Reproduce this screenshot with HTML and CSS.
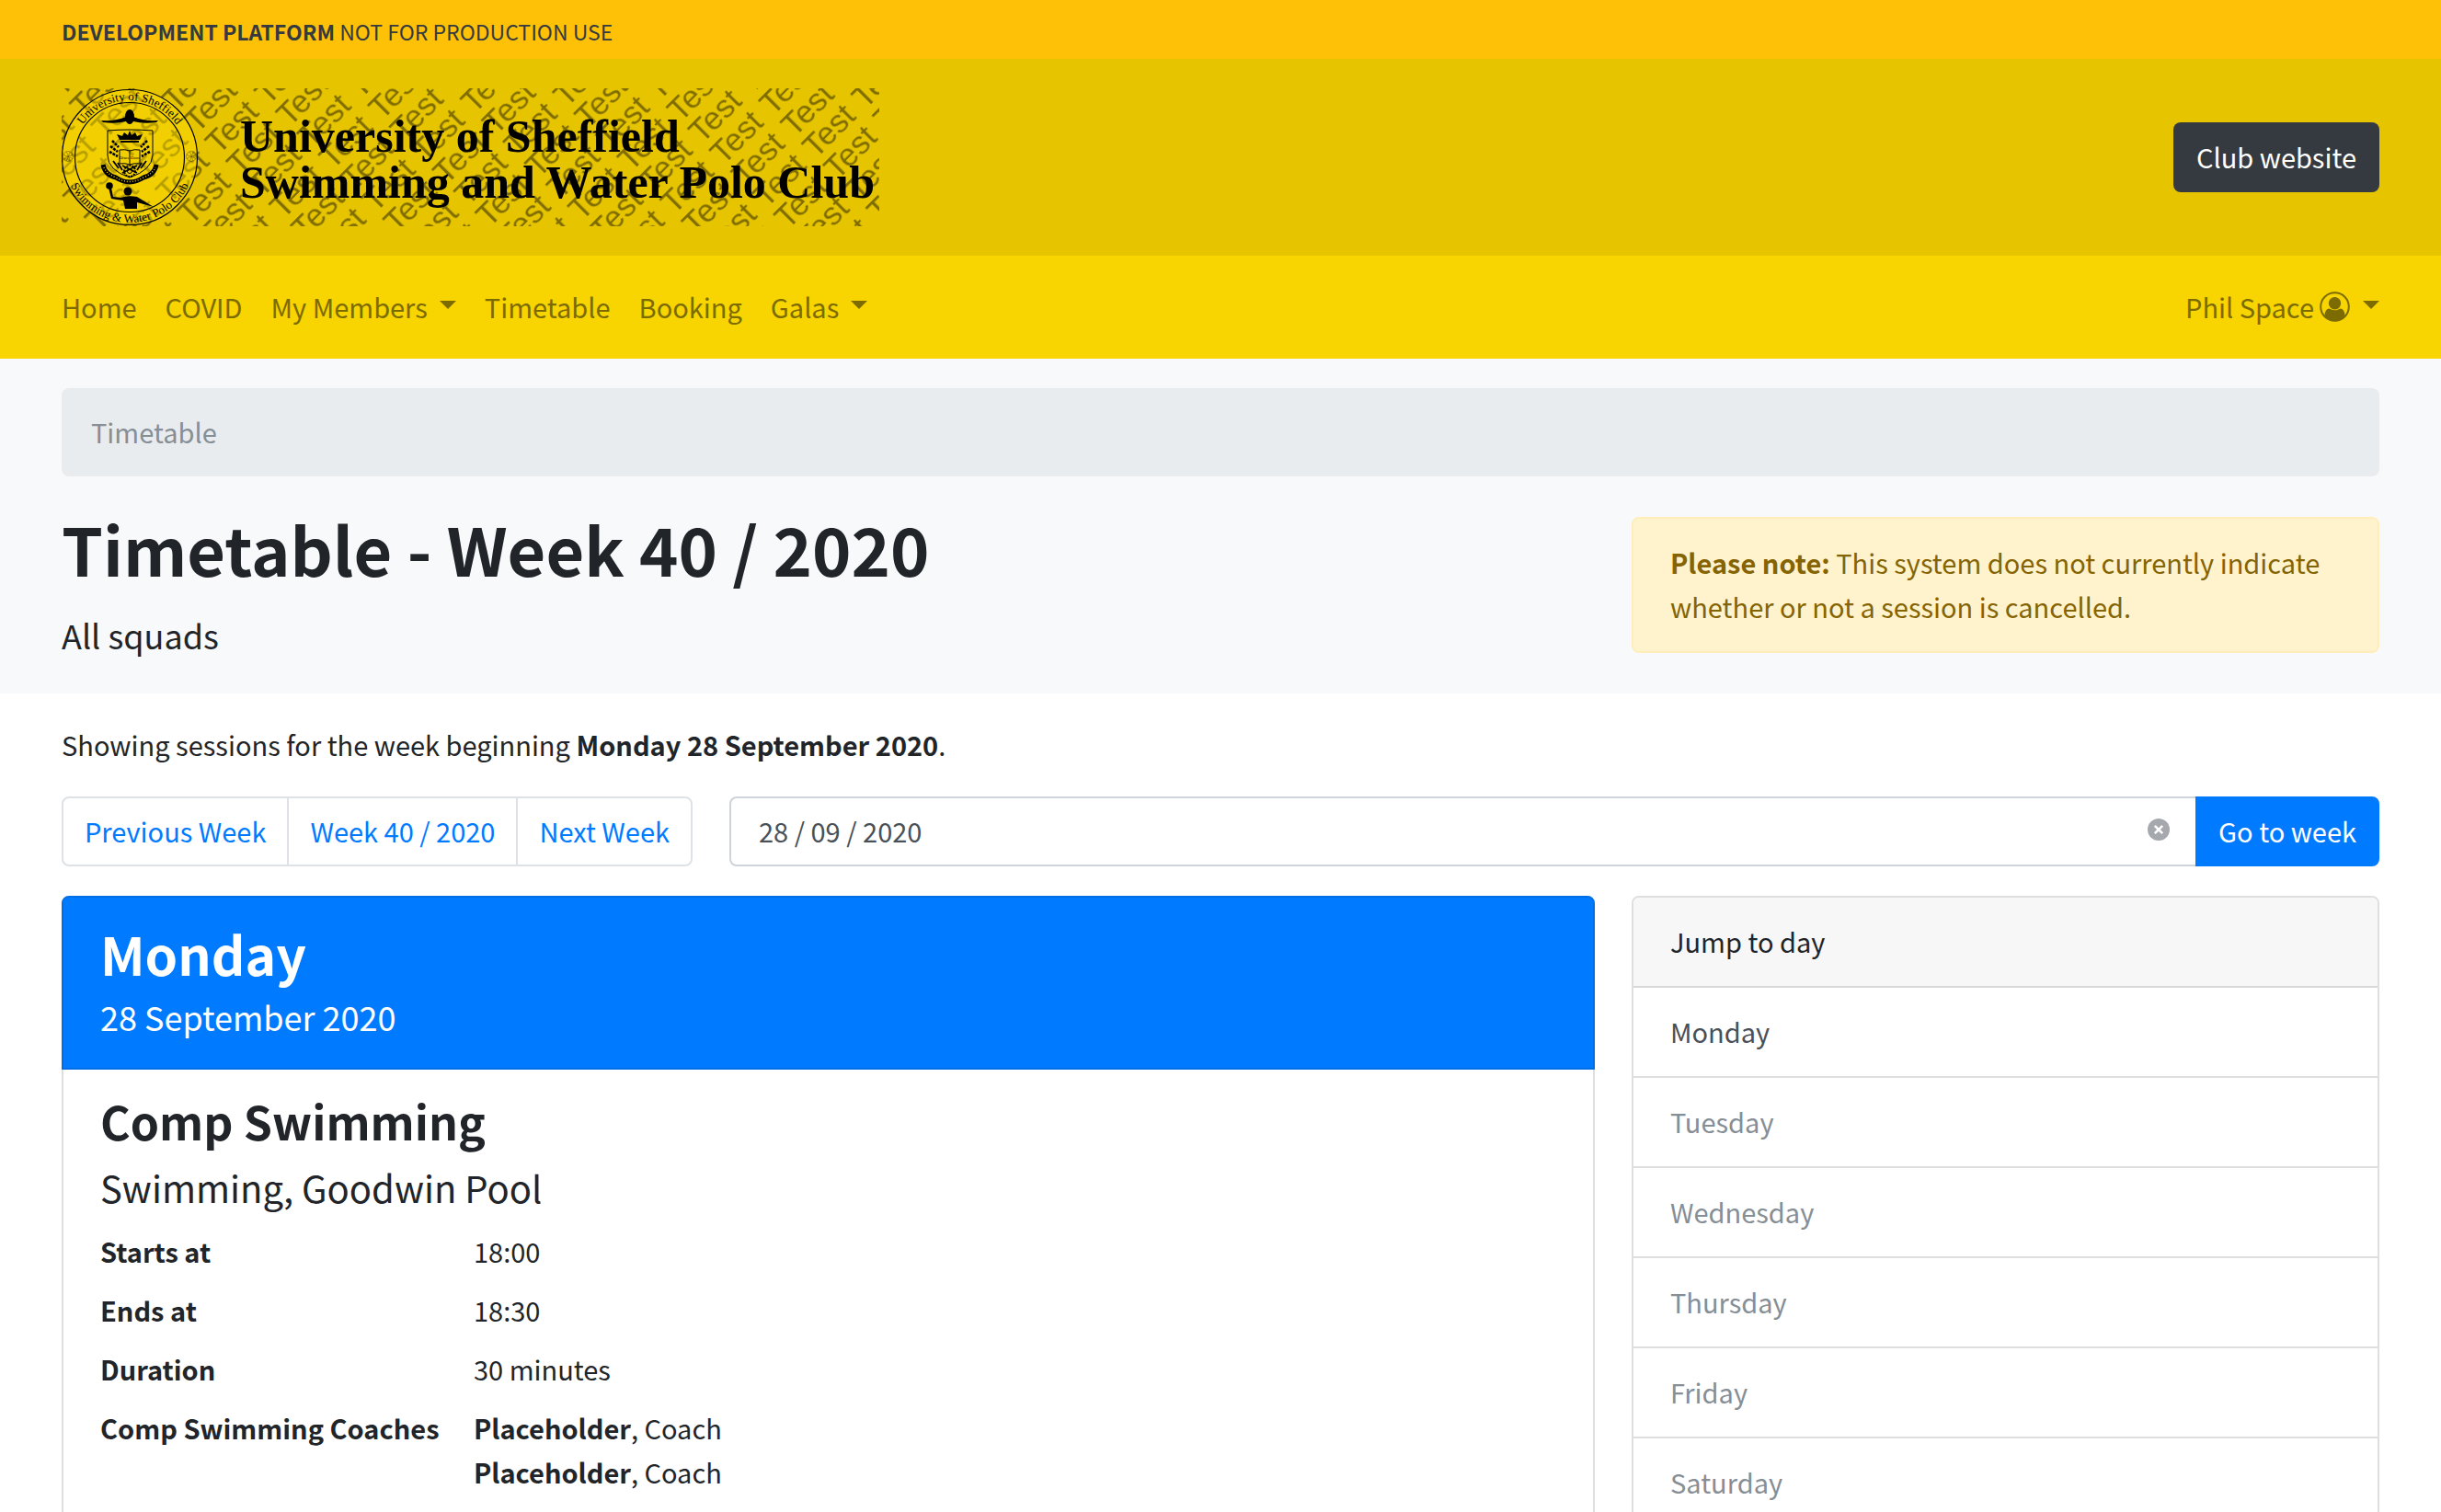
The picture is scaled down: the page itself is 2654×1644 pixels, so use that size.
FILE: index.html
```html
<!DOCTYPE html>
<html lang="en">
<head>
<meta charset="utf-8">
<meta name="viewport" content="width=device-width, initial-scale=1">
<title>Timetable - Week 40 / 2020</title>
<link rel="stylesheet" href="styles.css">
</head>
<body>
<div class="platform-notice"><strong>DEVELOPMENT PLATFORM</strong> NOT FOR PRODUCTION USE</div>

<header class="masthead">
  <a class="logo" href="#" aria-label="University of Sheffield Swimming and Water Polo Club">
    <svg class="logo-art" viewBox="0 0 889 150" width="889" height="150">
      <defs>
        <pattern id="watermark" width="76" height="33" patternUnits="userSpaceOnUse" patternTransform="translate(699 64) rotate(-45)">
          <text class="logo-watermark" x="0" y="29">Test</text>
        </pattern>
        <path id="arc-top" d="M12 75a62 62 0 0 1 124 0"/>
        <path id="arc-bottom" d="M3 75a71 71 0 0 0 142 0"/>
      </defs>
      <rect width="889" height="150" fill="url(#watermark)"/>
      <circle cx="74" cy="75" r="74" fill="#ffdd00" fill-opacity=".45"/>
      <circle cx="74" cy="75" r="73.500" fill="none" stroke="#000" stroke-width="1.200"/>
      <circle cx="74" cy="75" r="59.500" fill="none" stroke="#000" stroke-width="1.200"/>
      <text class="logo-ring"><textPath href="#arc-top" startOffset="50%" text-anchor="middle">University of Sheffield</textPath></text>
      <text class="logo-ring"><textPath href="#arc-bottom" startOffset="50%" text-anchor="middle">Swimming &amp; Water Polo Club</textPath></text>
      <g fill="none" stroke="#000" stroke-opacity=".5" stroke-width=".6">
        <circle cx="7" cy="74" r="5.500"/><path d="M2 72q5 4 10 0M2 77q5-5 10 0M5 69q4 5 0 10M9 69q-3 5 0 10"/>
        <circle cx="141" cy="74" r="5.500"/><path d="M136 72q5 4 10 0M136 77q5-5 10 0M139 69q4 5 0 10M143 69q-3 5 0 10"/>
      </g>
      <path d="M43 35q16 1 27-4v5q-11 3-25 1zM105 35q-16 1-27-4v5q11 3 25 1z"/>
      <ellipse cx="74" cy="31" rx="5" ry="8"/>
      <path d="M50 46q12-1 24-1t25 1v27q-1 16-25 24-24-8-24-24z" fill="none" stroke="#000" stroke-width="1"/>
      <path d="M63 56l-3-6 6 2 2-4 4 3 2-5 2 5 4-3 2 4 6-2-3 6zM64 57h20v2H64z"/>
      <path d="M63 67q6-1 11 1 5-2 11-1v15q-6-1-11 1-5-2-11-1zM74 68v15" fill="none" stroke="#000" stroke-width="1"/>
      <text class="logo-motto" x="74" y="77" text-anchor="middle">Disce Doce</text>
      <path d="M55 57l7 7M53 63l8 6M52 69l9 5M93 57l-7 7M95 63l-8 6M96 69l-9 5" stroke="#000" stroke-width="2.600" stroke-dasharray="3 1"/>
      <path d="M56 79l6 8M61 81l5 8M66 84l16 8M92 79l-6 8M87 81l-5 8M82 84l-16 8" stroke="#000" stroke-width="1.800"/>
      <circle cx="74" cy="90" r="6" fill="none" stroke="#000" stroke-width="2" stroke-dasharray="2 1"/>
      <circle cx="74" cy="90" r="2.500" fill="none" stroke="#000"/>
      <path d="M45 83q2 11 14 14 15 10 30 0 12-3 14-14" fill="none" stroke="#000" stroke-width="5"/>
      <path d="M46 86q3 7 13 11 15 9 30 0 10-4 13-11" fill="none" stroke="#e6c400" stroke-width="1.500" stroke-dasharray="1 2"/>
      <circle cx="52" cy="106" r="3.800"/>
      <circle cx="72" cy="112" r="4.500"/>
      <path d="M51 108h3l2 10 8 1q8-3 18-1l18 11-18-5v7H69l-2-9-13-2z"/>
      <text class="logo-name" x="194" y="69">University of Sheffield</text>
      <text class="logo-name" x="194" y="119">Swimming and Water Polo Club</text>
    </svg>
  </a>
  <a class="btn btn-dark" href="#">Club website</a>
</header>

<nav class="navbar" aria-label="Main">
  <div class="nav-links">
    <a class="nav-link" href="#">Home</a>
    <a class="nav-link" href="#">COVID</a>
    <a class="nav-link" href="#">My Members<span class="caret"></span></a>
    <a class="nav-link" href="#">Timetable</a>
    <a class="nav-link" href="#">Booking</a>
    <a class="nav-link" href="#">Galas<span class="caret"></span></a>
  </div>
  <a class="nav-link nav-user" href="#">Phil Space
    <svg class="user-icon" viewBox="0 0 33 33" width="33" height="33" aria-hidden="true">
      <circle cx="16.500" cy="16.500" r="15.300" fill="none" stroke="currentColor" stroke-width="2"/>
      <circle cx="16.500" cy="12.800" r="6.700" fill="currentColor"/>
      <path d="M5.500 26Q6 18.500 10.500 18.500q6 3.500 12 0 4.500 0 5 7.500-4 6-11 6t-11-6z" fill="currentColor"/>
    </svg>
    <span class="caret"></span></a>
</nav>

<section class="page-head">
  <nav class="breadcrumb" aria-label="Breadcrumb">Timetable</nav>
  <div class="columns page-head-row">
    <div>
      <h1 class="page-title">Timetable - Week 40 / 2020</h1>
      <p class="page-lead">All squads</p>
    </div>
    <div class="alert" role="note"><strong>Please note:</strong> This system does not currently indicate whether or not a session is cancelled.</div>
  </div>
</section>

<main class="content">
  <p class="intro">Showing sessions for the week beginning <strong>Monday 28 September 2020</strong>.</p>

  <div class="toolbar">
    <div class="btn-group">
      <a class="btn btn-outline" href="#">Previous Week</a>
      <a class="btn btn-outline" href="#">Week 40 / 2020</a>
      <a class="btn btn-outline" href="#">Next Week</a>
    </div>
    <form class="week-form">
      <div class="date-field">
        <input class="date-input" type="text" value="28 / 09 / 2020" aria-label="Week beginning">
        <button class="clear-btn" type="button" aria-label="Clear date">
          <svg viewBox="0 0 24 24" width="24" height="24"><circle cx="12" cy="12" r="12" fill="#a5a8ac"/><path d="M7.800 7.800l8.400 8.400M16.200 7.800l-8.400 8.400" stroke="#fff" stroke-width="2.600"/></svg>
        </button>
      </div>
      <button class="btn btn-primary" type="submit">Go to week</button>
    </form>
  </div>

  <div class="columns">
    <article class="card">
      <header class="day-header">
        <h2 class="day-name">Monday</h2>
        <p class="day-date">28 September 2020</p>
      </header>
      <div class="session">
        <h3 class="session-name">Comp Swimming</h3>
        <p class="session-place">Swimming, Goodwin Pool</p>
        <dl class="details">
          <dt>Starts at</dt><dd>18:00</dd>
          <dt>Ends at</dt><dd>18:30</dd>
          <dt>Duration</dt><dd>30 minutes</dd>
          <dt>Comp Swimming Coaches</dt>
          <dd><strong>Placeholder</strong>, Coach<br><strong>Placeholder</strong>, Coach</dd>
        </dl>
      </div>
    </article>

    <aside class="card">
      <div class="jump-header">Jump to day</div>
      <a class="jump-link jump-active" href="#">Monday</a>
      <a class="jump-link" href="#">Tuesday</a>
      <a class="jump-link" href="#">Wednesday</a>
      <a class="jump-link" href="#">Thursday</a>
      <a class="jump-link" href="#">Friday</a>
      <a class="jump-link" href="#">Saturday</a>
    </aside>
  </div>
</main>
</body>
</html>
```
FILE: styles.css
```css
* { box-sizing: border-box; }

html { height: 100%; }

body {
  height: 100%;
  margin: 0;
  overflow: hidden;
  background: #fff;
  color: #212529;
  font-family: "Noto Sans CJK SC", "Noto Sans", sans-serif;
  font-size: 29px;
  line-height: 48px;
}

h1, h2, h3, p, dl, dd { margin: 0; }
a { color: inherit; text-decoration: none; }
button, input { font: inherit; }

.platform-notice {
  padding: 16px 67px 12px;
  background: #ffc107;
  color: #343a40;
  font-size: 23px;
  line-height: 36px;
}

.masthead {
  display: flex;
  align-items: center;
  justify-content: space-between;
  padding: 32px 67px;
  background: #e6c400;
}

.logo-art { display: block; }
.logo-watermark { font: 35px "Liberation Sans", Arial, sans-serif; fill: #000; fill-opacity: .45; }
.logo-ring { font: 13px "Liberation Serif", "Times New Roman", serif; }
.logo-motto { font: 5px "Liberation Serif", "Times New Roman", serif; }
.logo-name { font: bold 50px "Liberation Serif", "Times New Roman", serif; }

.btn {
  padding: 11px 23px 13px;
  border: 2px solid transparent;
  border-radius: 8px;
  text-align: center;
  white-space: nowrap;
}
.btn-dark { background: #343a40; color: #fff; }
.btn-primary {
  border-radius: 0 8px 8px 0;
  background: #007bff;
  color: #fff;
}

.navbar {
  display: flex;
  align-items: center;
  justify-content: space-between;
  padding: 31px 67px 33px;
  background: #f8d500;
  color: #7c6b00;
}
.nav-links { display: flex; gap: 31px; }
.nav-link { display: flex; align-items: center; }
.nav-user { gap: 6px; }
.caret {
  margin: 0 0 4px 13px;
  border: 9px solid transparent;
  border-top-color: currentColor;
  border-bottom: 0;
}
.nav-user .caret { margin-left: 8px; }

.page-head { padding: 32px 67px; background: #f8f9fb; }
.breadcrumb {
  margin-bottom: 32px;
  padding: 23px 32px 25px;
  border-radius: 8px;
  background: #e9ecef;
  color: #868e96;
}

.columns {
  display: grid;
  grid-template-columns: minmax(0, 1667fr) minmax(0, 813fr);
  gap: 40px;
}
.page-head-row { align-items: center; }
.page-title { font-size: 72px; line-height: 92px; }
.page-lead { margin: 18px 0 2px; font-size: 36px; line-height: 60px; }
.alert {
  padding: 23px 40px 25px;
  border: 2px solid #ffeeba;
  border-radius: 8px;
  background: #fff3cd;
  color: #856404;
}

.content { padding: 31px 67px; }
.intro { margin-bottom: 33px; }

.toolbar { display: flex; gap: 40px; margin-bottom: 32px; }
.btn-group {
  display: flex;
  border: 2px solid #dee2e6;
  border-radius: 8px;
}
.btn-outline {
  border: 0;
  border-radius: 0;
  color: #007bff;
}
.btn-outline + .btn-outline { border-left: 2px solid #dee2e6; }
.week-form { display: flex; flex: 1; }
.date-field {
  display: flex;
  flex: 1;
  align-items: center;
  padding: 0 28px 0 30px;
  border: 2px solid #ced4da;
  border-right: 0;
  border-radius: 8px 0 0 8px;
}
.date-input {
  flex: 1;
  min-width: 0;
  padding: 0 0 2px;
  border: 0;
  background: none;
  color: #495057;
}
.clear-btn { display: flex; padding: 0 0 4px; border: 0; background: none; }

.card { border: 2px solid #dfdfdf; border-radius: 8px; }
.day-header {
  margin: -2px -2px 0;
  padding: 22px 40px 26px;
  border: 2px solid #006fe6;
  border-radius: 8px 8px 0 0;
  background: #007bff;
  color: #fff;
}
.day-name { font-size: 57px; line-height: 77px; }
.day-date { font-size: 36px; line-height: 60px; }

.session { padding: 22px 40px; }
.session-name { font-size: 50px; line-height: 67px; }
.session-place { margin: 6px 0 12px; font-size: 40px; line-height: 66px; }
.details {
  display: grid;
  grid-template-columns: 374px 1fr;
  gap: 16px 32px;
}
.details dt { font-weight: bold; }

.jump-header {
  padding: 23px 40px 25px;
  border-bottom: 2px solid #d8d8d8;
  border-radius: 6px 6px 0 0;
  background: #f7f7f7;
}
.jump-link {
  display: block;
  padding: 23px 40px 25px;
  border-bottom: 2px solid #dfdfdf;
  color: #868e96;
}
.jump-active { color: #495057; }
```
